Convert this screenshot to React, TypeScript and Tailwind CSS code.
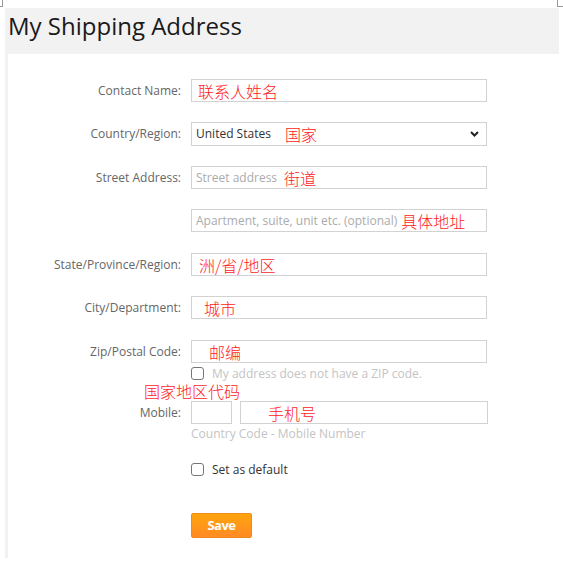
import React from "react";

const cjk = { fontFamily: '"Noto Sans CJK SC", "Noto Sans", sans-serif' };

function Label({ children }: { children?: React.ReactNode }) {
  return (
    <div className="w-[174px] shrink-0 pr-[1px] text-right text-[12px] text-[#666]">{children}</div>
  );
}

function Red({ children, className = "" }: { children: React.ReactNode; className?: string }) {
  return (
    <span className={"text-[16px] font-light leading-[16px] text-[#ff1a1a] " + className} style={cjk}>
      {children}
    </span>
  );
}

function Box({ children, className = "" }: { children?: React.ReactNode; className?: string }) {
  return (
    <div className={"flex items-center border border-[#d2d2d2] bg-white " + className}>{children}</div>
  );
}

function Check() {
  return <div className="h-[13px] w-[13px] shrink-0 rounded-[3px] border-[1.5px] border-[#767676] bg-white" />;
}

export default function App() {
  return (
    <div className="relative h-[581px] w-[563px] bg-white" style={{ fontFamily: '"Open Sans", "Noto Sans", sans-serif' }}>
      {/* crop marks */}
      <div className="absolute left-0 top-0 h-[7px] w-[3px] border-b border-r border-[#9a9a9a]" />
      <div className="absolute right-0 top-0 h-[7px] w-[6px] border-b border-l border-[#9a9a9a]" />

      <div className="ml-[5px] w-[554px] pt-[8px]">
        <div className="h-[46px] bg-[#f2f2f2] pl-[3px] pt-[3px]">
          <h1 className="text-[24px] leading-[30px] text-[#1a1a1a]">My Shipping Address</h1>
        </div>

        <div className="flex h-[504px] flex-col border-l-[3px] border-[#f2f2f2]">
          <div className="mt-[25px] flex h-[23px] items-center gap-[9px]">
            <Label>Contact Name:</Label>
            <Box className="h-[23px] w-[296px] pl-[6px]">
              <Red>联系人姓名</Red>
            </Box>
          </div>

          <div className="mt-[20px] flex h-[24px] items-center gap-[9px]">
            <Label>Country/Region:</Label>
            <Box className="h-[24px] w-[296px] pl-[4px] pr-[7px]">
              <span className="text-[12px] text-[#333]">United States</span>
              <Red className="ml-[14px]">国家</Red>
              <svg className="ml-auto" width="9" height="6" viewBox="0 0 9 6">
                <path d="M1 1 L4.5 4.5 L8 1" fill="none" stroke="#222" strokeWidth="2" />
              </svg>
            </Box>
          </div>

          <div className="mt-[20px] flex h-[23px] items-center gap-[9px]">
            <Label>Street Address:</Label>
            <Box className="h-[23px] w-[296px] pl-[4px]">
              <span className="text-[12px] text-[#ababab]">Street address</span>
              <Red className="ml-[7px]">街道</Red>
            </Box>
          </div>

          <div className="mt-[20px] flex h-[23px] items-center gap-[9px]">
            <Label />
            <Box className="h-[23px] w-[296px] pl-[4px]">
              <span className="text-[12px] text-[#ababab]">Apartment, suite, unit etc. (optional)</span>
              <Red className="ml-[4px]">具体地址</Red>
            </Box>
          </div>

          <div className="mt-[21px] flex h-[23px] items-center gap-[9px]">
            <Label>State/Province/Region:</Label>
            <Box className="h-[23px] w-[296px] pl-[7px]">
              <Red>洲/省/地区</Red>
            </Box>
          </div>

          <div className="mt-[20px] flex h-[23px] items-center gap-[9px]">
            <Label>City/Department:</Label>
            <Box className="h-[23px] w-[296px] pl-[12px]">
              <Red>城市</Red>
            </Box>
          </div>

          <div className="mt-[21px] flex h-[23px] items-center gap-[9px]">
            <Label>Zip/Postal Code:</Label>
            <Box className="h-[23px] w-[296px] pl-[17px]">
              <Red>邮编</Red>
            </Box>
          </div>

          <div className="mt-[4px] flex h-[13px] items-center gap-[8px] pl-[183px]">
            <Check />
            <span className="text-[12px] text-[#c4c4c4]">My address does not have a ZIP code.</span>
          </div>

          <div className="mt-[3px] flex h-[16px] pl-[136px]">
            <Red>国家地区代码</Red>
          </div>

          <div className="mt-[2px] flex h-[23px] items-center gap-[9px]">
            <Label>Mobile:</Label>
            <Box className="h-[23px] w-[41px]" />
            <Box className="ml-[-1px] h-[23px] w-[248px] pl-[27px]">
              <Red>手机号</Red>
            </Box>
          </div>

          <div className="mt-[2px] flex h-[16px] items-center pl-[183px]">
            <span className="text-[12px] text-[#c4c4c4]">Country Code - Mobile Number</span>
          </div>

          <div className="mt-[21px] flex h-[13px] items-center gap-[8px] pl-[183px]">
            <Check />
            <span className="text-[12px] text-[#333]">Set as default</span>
          </div>

          <div className="mt-[37px] pl-[183px]">
            <button className="flex h-[25px] w-[61px] items-center justify-center rounded-[2px] border border-[#f08a1c] bg-gradient-to-b from-[#ffa40a] to-[#ff8a22] text-[13px] font-bold tracking-[-0.5px] text-white">
              Save
            </button>
          </div>
        </div>
      </div>
    </div>
  );
}
